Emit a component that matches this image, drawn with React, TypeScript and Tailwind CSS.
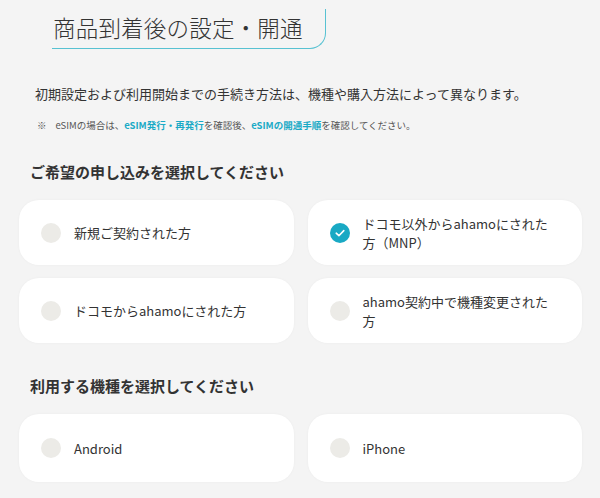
import React, { useState } from "react";

const applyOptions = [
  "新規ご契約された方",
  "ドコモ以外からahamoにされた方（MNP）",
  "ドコモからahamoにされた方",
  "ahamo契約中で機種変更された方",
];

const deviceOptions = ["Android", "iPhone"];

function Radio({ checked }: { checked: boolean }) {
  if (checked) {
    return (
      <span className="flex h-[20px] w-[20px] shrink-0 items-center justify-center rounded-full bg-[#19a9c4]">
        <svg width="12" height="12" viewBox="0 0 12 12" fill="none">
          <path d="M2.2 6.2 L4.9 8.7 L9.8 3.6" stroke="#fff" strokeWidth="1.6" strokeLinecap="round" strokeLinejoin="round" />
        </svg>
      </span>
    );
  }
  return <span className="h-[20px] w-[20px] shrink-0 rounded-full bg-[#ecebe7]" />;
}

function OptionCard({
  label,
  checked,
  onClick,
  height,
}: {
  label: string;
  checked: boolean;
  onClick: () => void;
  height: string;
}) {
  return (
    <button
      onClick={onClick}
      className={`flex ${height} items-center gap-[13px] rounded-[20px] bg-white pl-[22px] pr-[30px] text-left shadow-[0_0_3px_rgba(0,0,0,0.04)]`}
    >
      <Radio checked={checked} />
      <span className="text-[13px] leading-[19px] text-[#333]">{label}</span>
    </button>
  );
}

export default function App() {
  const [apply, setApply] = useState(1);
  const [device, setDevice] = useState(-1);

  return (
    <div className="min-h-[498px] bg-[#f4f4f4] pb-4 font-['Noto_Sans_CJK_JP','Noto_Sans',sans-serif] text-[#333]">
      <div className="pl-[52px] pt-[9px]">
        <div className="flex h-[40px] w-[274px] items-center rounded-br-[16px] border-b-[1.5px] border-r-[1.5px] border-[#58c2d2] pb-[2px] pl-[1px]">
          <h1 className="text-[22.5px] font-light leading-none tracking-[0.2px] text-[#333]">商品到着後の設定・開通</h1>
        </div>
      </div>

      <p className="mt-[35px] pl-[35px] text-[13px] leading-[20px]">
        初期設定および利用開始までの手続き方法は、機種や購入方法によって異なります。
      </p>
      <p className="mt-[14px] pl-[37px] text-[9.5px] leading-[14px] text-[#555]">
        ※<span className="ml-[9px]">eSIMの場合は、</span>
        <a className="font-bold text-[#1aaac6]">eSIM発行・再発行</a>を確認後、
        <a className="font-bold text-[#1aaac6]">eSIMの開通手順</a>を確認してください。
      </p>

      <h2 className="mt-[29px] pl-[30px] text-[15px] font-bold leading-[22px]">ご希望の申し込みを選択してください</h2>
      <div className="mt-[17px] grid grid-cols-2 gap-x-[14px] gap-y-[13px] pl-[19px] pr-[18px]">
        {applyOptions.map((label, i) => (
          <OptionCard key={label} label={label} checked={apply === i} onClick={() => setApply(i)} height="h-[65px]" />
        ))}
      </div>

      <h2 className="mt-[32px] pl-[30px] text-[15px] font-bold leading-[22px]">利用する機種を選択してください</h2>
      <div className="mt-[17px] grid grid-cols-2 gap-x-[14px] pl-[19px] pr-[18px]">
        {deviceOptions.map((label, i) => (
          <OptionCard key={label} label={label} checked={device === i} onClick={() => setDevice(i)} height="h-[68px]" />
        ))}
      </div>
    </div>
  );
}
